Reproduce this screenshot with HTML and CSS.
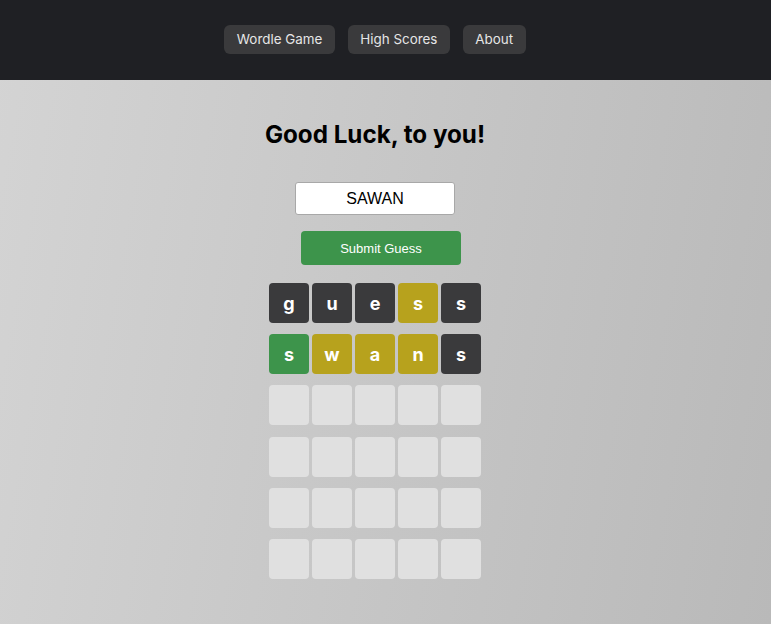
FILE: index.html
```html
<!DOCTYPE html>
<html>
<head>
<meta charset="utf-8">
<link rel="stylesheet" href="styles.css">
</head>
<body>
<nav class="topbar">
  <div class="topbar-inner">
    <a class="nav-btn">Wordle Game</a>
    <a class="nav-btn">High Scores</a>
    <a class="nav-btn">About</a>
  </div>
</nav>
<main class="page">
  <h1 class="title">Good Luck, to you!</h1>
  <input class="guess-input" type="text" value="SAWAN">
  <button class="submit-btn">Submit Guess</button>
  <div class="board">
    <div class="row">
      <div class="tile absent">g</div><div class="tile absent">u</div><div class="tile absent">e</div><div class="tile present">s</div><div class="tile absent">s</div>
    </div>
    <div class="row">
      <div class="tile correct">s</div><div class="tile present">w</div><div class="tile present">a</div><div class="tile present">n</div><div class="tile absent">s</div>
    </div>
    <div class="row"><div class="tile"></div><div class="tile"></div><div class="tile"></div><div class="tile"></div><div class="tile"></div></div>
    <div class="row"><div class="tile"></div><div class="tile"></div><div class="tile"></div><div class="tile"></div><div class="tile"></div></div>
    <div class="row"><div class="tile"></div><div class="tile"></div><div class="tile"></div><div class="tile"></div><div class="tile"></div></div>
    <div class="row"><div class="tile"></div><div class="tile"></div><div class="tile"></div><div class="tile"></div><div class="tile"></div></div>
  </div>
</main>
</body>
</html>
```
FILE: styles.css
```css
* { box-sizing: border-box; }
html, body { margin: 0; padding: 0; height: 100%; }
body {
  font-family: Inter, "Noto Sans", sans-serif;
  background: linear-gradient(100deg, #d4d4d4 0%, #b9b9b9 100%);
  min-height: 624px;
}
.topbar {
  background: #1f2024;
  height: 80px;
}
.topbar-inner {
  width: 750px;
  height: 78px;
  display: flex;
  justify-content: center;
  align-items: center;
  gap: 13px;
}
.nav-btn {
  display: flex;
  align-items: center;
  height: 29px;
  padding: 0 12.5px;
  background: #3a3a3c;
  color: #e6e6e6;
  border-radius: 6px;
  font-size: 13.4px;
  font-weight: 400;
}
.page {
  width: 750px;
  display: flex;
  flex-direction: column;
  align-items: center;
}
.title {
  margin: 40px 0 0;
  font-size: 24.2px;
  font-weight: 700;
  line-height: 30px;
  color: #000;
}
.guess-input {
  margin-top: 32px;
  width: 160px;
  height: 33px;
  border: 1px solid #a8a8a8;
  border-radius: 3px;
  background: #fff;
  font-family: "Liberation Sans", Arial, sans-serif;
  font-size: 16px;
  text-align: center;
  color: #000;
  padding: 0;
}
.submit-btn {
  margin-top: 16px;
  margin-left: 12px;
  width: 160px;
  height: 34px;
  border: none;
  border-radius: 4px;
  background: #3d944b;
  color: #fff;
  font-family: "Liberation Sans", Arial, sans-serif;
  font-size: 13px;
}
.board {
  margin-top: 18px;
  display: flex;
  flex-direction: column;
  gap: 11.2px;
}
.row {
  display: flex;
  gap: 3px;
}
.tile {
  width: 40px;
  height: 40px;
  border-radius: 4px;
  background: #e0e0e0;
  display: flex;
  align-items: center;
  justify-content: center;
  color: #fff;
  font-size: 18px;
  font-weight: 700;
}
.tile.absent { background: #3a3a3c; }
.tile.present { background: #b7a21d; }
.tile.correct { background: #3d944b; }
```
